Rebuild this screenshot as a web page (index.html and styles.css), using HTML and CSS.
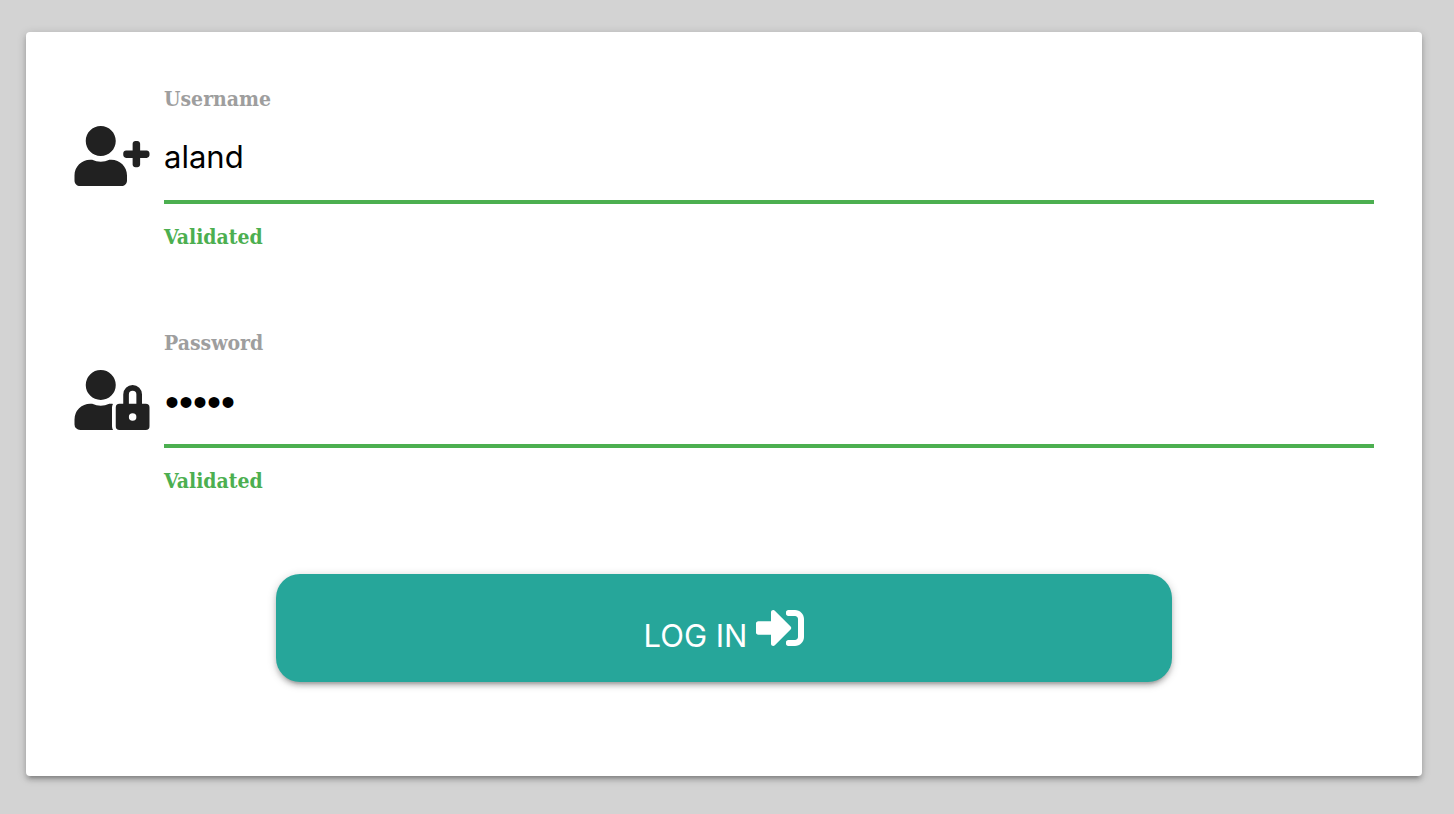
FILE: index.html
```html
<!DOCTYPE html>
<html lang="en">
<head>
  <meta charset="utf-8">
  <meta name="viewport" content="width=device-width, initial-scale=1">
  <title>Log in</title>
  <link rel="stylesheet" href="styles.css">
</head>
<body>
  <main class="page">
    <form class="card">
      <div class="field">
        <svg class="field-icon" viewBox="0 0 640 512" aria-hidden="true"><path d="M616 208h-56v-56c0-13-11-24-24-24h-16c-13 0-24 11-24 24v56h-56c-13 0-24 11-24 24v16c0 13 11 24 24 24h56v56c0 13 11 24 24 24h16c13 0 24-11 24-24v-56h56c13 0 24-11 24-24v-16c0-13-11-24-24-24zm-392 48c70.700 0 128-57.300 128-128S294.700 0 224 0 96 57.300 96 128s57.300 128 128 128zm89.600 32h-16.700c-22.200 10.200-46.900 16-72.900 16s-50.600-5.800-72.900-16h-16.700C60.200 288 0 348.200 0 422.400V464c0 26.500 21.500 48 48 48h352c26.500 0 48-21.500 48-48v-41.600c0-74.200-60.200-134.400-134.400-134.400z"/></svg>
        <div class="field-body">
          <label class="field-label" for="username">Username</label>
          <input class="field-input" id="username" type="text" value="aland" autocomplete="off" spellcheck="false">
          <span class="field-helper">Validated</span>
        </div>
      </div>
      <div class="field">
        <svg class="field-icon" viewBox="0 0 640 512" aria-hidden="true"><path d="M224 256A128 128 0 1 0 96 128a128 128 0 0 0 128 128zm96 64a63.080 63.080 0 0 1 8.100-30.500c-4.800-.5-9.500-1.500-14.500-1.500h-16.700a174.080 174.080 0 0 1-145.800 0h-16.700A134.430 134.430 0 0 0 0 422.400V464a48 48 0 0 0 48 48h280.900a63.540 63.540 0 0 1-8.900-32zm288-32h-32v-80a80 80 0 0 0-160 0v80h-32a32 32 0 0 0-32 32v160a32 32 0 0 0 32 32h224a32 32 0 0 0 32-32V320a32 32 0 0 0-32-32zM496 432a32 32 0 1 1 32-32 32 32 0 0 1-32 32zm32-144h-64v-80a32 32 0 0 1 64 0z"/></svg>
        <div class="field-body">
          <label class="field-label" for="password">Password</label>
          <input class="field-input field-input-secret" id="password" type="password" value="aland">
          <span class="field-helper">Validated</span>
        </div>
      </div>
      <button class="submit" type="button">
        <span>LOG IN</span>
        <svg class="submit-icon" viewBox="0 0 512 512" aria-hidden="true"><path d="M416 448h-72c-13.300 0-24-10.700-24-24v-16c0-13.300 10.700-24 24-24h72c17.700 0 32-14.300 32-32V160c0-17.700-14.300-32-32-32h-72c-13.300 0-24-10.700-24-24V88c0-13.300 10.700-24 24-24h72c53 0 96 43 96 96v192c0 53-43 96-96 96zm-47-209L201 71c-15-15-41-4.500-41 17v96H24c-13.300 0-24 10.700-24 24v96c0 13.300 10.700 24 24 24h136v96c0 21.500 26 32 41 17l168-168c9.300-9.400 9.300-24.600 0-34z"/></svg>
      </button>
    </form>
  </main>
</body>
</html>
```
FILE: styles.css
```css
* {
  box-sizing: border-box;
}

body {
  margin: 0;
  background: #d3d3d3;
  font-family: Inter, "Liberation Sans", sans-serif;
}

.page {
  padding: 32px 32px 38px 26px;
}

.card {
  display: flex;
  flex-direction: column;
  padding: 49px 26px 94px;
  border-radius: 4px;
  background: #fff;
  box-shadow: 0 4px 4px 0 rgba(0, 0, 0, 0.14), 0 6px 2px -4px rgba(0, 0, 0, 0.12), 0 2px 10px 0 rgba(0, 0, 0, 0.2);
}

.field {
  display: flex;
  align-items: flex-start;
  gap: 14px;
  height: 244px;
  padding: 0 22px;
}

.field-icon {
  flex: none;
  width: 76px;
  height: 60px;
  margin-top: 45px;
  fill: #212121;
}

.field-body {
  display: flex;
  flex: 1;
  flex-direction: column;
}

.field-label,
.field-helper {
  font-family: "DejaVu Serif Condensed", "DejaVu Serif", serif;
  font-size: 21px;
  font-weight: 700;
  line-height: 36px;
}

.field-label {
  color: #9e9e9e;
}

.field-input {
  width: 100%;
  height: 87px;
  padding: 0 0 4px;
  border: 0;
  border-bottom: 4px solid #4caf50;
  border-radius: 0;
  outline: 0;
  background: transparent;
  color: #000;
  font-family: inherit;
  font-size: 31px;
}

.field-input-secret {
  padding: 0 1px;
  font-family: "Liberation Sans", sans-serif;
  font-size: 40px;
}

.field-helper {
  margin-top: 15px;
  color: #4caf50;
}

.submit {
  display: flex;
  align-items: center;
  align-self: center;
  justify-content: center;
  gap: 9px;
  width: 66.667%;
  height: 108px;
  margin-top: 5px;
  padding: 0;
  border: 0;
  border-radius: 24px;
  background: #26a69a;
  color: #fff;
  font-family: inherit;
  font-size: 31px;
  cursor: pointer;
  box-shadow: 0 4px 4px 0 rgba(0, 0, 0, 0.14), 0 6px 2px -4px rgba(0, 0, 0, 0.12), 0 2px 10px 0 rgba(0, 0, 0, 0.2);
}

.submit span {
  padding-top: 14px;
}

.submit-icon {
  width: 48px;
  height: 48px;
  fill: currentColor;
}
```
